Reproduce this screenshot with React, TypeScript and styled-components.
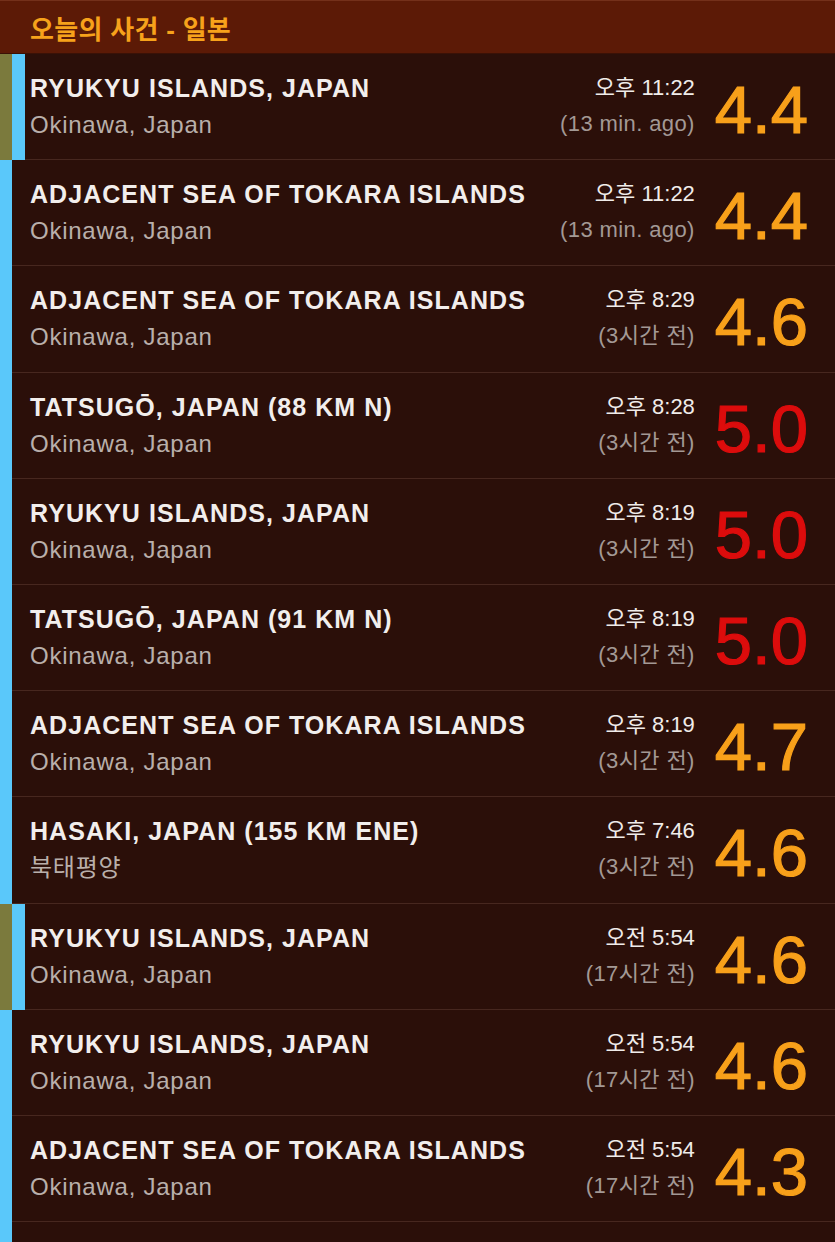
import React from "react";
import styled, { createGlobalStyle } from "styled-components";

const Global = createGlobalStyle`
  html, body { margin: 0; padding: 0; background: #2b0f09; }
  body { font-family: "Liberation Sans", "Noto Sans CJK KR", Arial, sans-serif; overflow: hidden; }
  * { box-sizing: border-box; }
`;

const Page = styled.div`
  width: 835px;
  background: #2b0f09;
`;

const Header = styled.header`
  height: 54px;
  background: #5c1a06;
  border-top: 1px solid #74301a;
  border-bottom: 1px solid #3a1106;
  padding-left: 30px;
  display: flex;
  align-items: center;
`;

const HeaderTitle = styled.h1`
  margin: 0;
  font-family: "Liberation Sans", "Noto Sans CJK KR", sans-serif;
  font-size: 26px;
  font-weight: 700;
  color: #f7a21b;
  letter-spacing: 0.3px;
`;

const Row = styled.div`
  display: flex;
  height: 106.2px;
`;

const Strip = styled.div<{ $color: string; $w: number }>`
  flex: 0 0 ${(p) => p.$w}px;
  background: ${(p) => p.$color};
`;

const Body = styled.div`
  flex: 1;
  display: flex;
  align-items: flex-start;
  padding: 16px 27px 0 18px;
  border-bottom: 1px solid #47271f;
`;

const Info = styled.div<{ $indent: number }>`
  flex: 1;
  min-width: 0;
  margin-left: ${(p) => p.$indent}px;
`;

const Title = styled.div`
  font-size: 25px;
  font-weight: 700;
  line-height: 36px;
  color: #f2eeec;
  letter-spacing: 1.05px;
  white-space: nowrap;
`;

const Sub = styled.div`
  font-size: 24px;
  line-height: 34px;
  padding-top: 2px;
  color: #b9afab;
  letter-spacing: 0.75px;
  white-space: nowrap;
`;

const When = styled.div`
  display: flex;
  flex-direction: column;
  align-items: flex-end;
  margin-right: 20px;
`;

const Clock = styled.div`
  font-size: 22px;
  line-height: 36px;
  color: #f0ecea;
  white-space: nowrap;
`;

const Ago = styled.div`
  font-size: 22px;
  line-height: 34px;
  padding-top: 1px;
  color: #a39995;
  letter-spacing: 0.4px;
  white-space: nowrap;
`;

const Mag = styled.div<{ $strong: boolean }>`
  font-size: 67px;
  line-height: 67px;
  margin-top: 6px;
  color: ${(p) => (p.$strong ? "#dc0c0c" : "#f8a01a")};
  -webkit-text-stroke: 1.2px ${(p) => (p.$strong ? "#dc0c0c" : "#f8a01a")};
  white-space: nowrap;
`;

type Quake = {
  title: string;
  sub: string;
  time: string;
  ago: string;
  mag: string;
  olive?: boolean;
};

const quakes: Quake[] = [
  { title: "RYUKYU ISLANDS, JAPAN", sub: "Okinawa, Japan", time: "오후 11:22", ago: "(13 min. ago)", mag: "4.4", olive: true },
  { title: "ADJACENT SEA OF TOKARA ISLANDS", sub: "Okinawa, Japan", time: "오후 11:22", ago: "(13 min. ago)", mag: "4.4" },
  { title: "ADJACENT SEA OF TOKARA ISLANDS", sub: "Okinawa, Japan", time: "오후 8:29", ago: "(3시간 전)", mag: "4.6" },
  { title: "TATSUGŌ, JAPAN (88 KM N)", sub: "Okinawa, Japan", time: "오후 8:28", ago: "(3시간 전)", mag: "5.0" },
  { title: "RYUKYU ISLANDS, JAPAN", sub: "Okinawa, Japan", time: "오후 8:19", ago: "(3시간 전)", mag: "5.0" },
  { title: "TATSUGŌ, JAPAN (91 KM N)", sub: "Okinawa, Japan", time: "오후 8:19", ago: "(3시간 전)", mag: "5.0" },
  { title: "ADJACENT SEA OF TOKARA ISLANDS", sub: "Okinawa, Japan", time: "오후 8:19", ago: "(3시간 전)", mag: "4.7" },
  { title: "HASAKI, JAPAN (155 KM ENE)", sub: "북태평양", time: "오후 7:46", ago: "(3시간 전)", mag: "4.6" },
  { title: "RYUKYU ISLANDS, JAPAN", sub: "Okinawa, Japan", time: "오전 5:54", ago: "(17시간 전)", mag: "4.6", olive: true },
  { title: "RYUKYU ISLANDS, JAPAN", sub: "Okinawa, Japan", time: "오전 5:54", ago: "(17시간 전)", mag: "4.6" },
  { title: "ADJACENT SEA OF TOKARA ISLANDS", sub: "Okinawa, Japan", time: "오전 5:54", ago: "(17시간 전)", mag: "4.3" },
];

export default function App() {
  return (
    <Page>
      <Global />
      <Header>
        <HeaderTitle>오늘의 사건 - 일본</HeaderTitle>
      </Header>
      {quakes.map((q, i) => (
        <Row key={i}>
          {q.olive ? (
            <>
              <Strip $color="#7b7a3d" $w={12} />
              <Strip $color="#5ac8fa" $w={13} />
            </>
          ) : (
            <Strip $color="#5ac8fa" $w={12} />
          )}
          <Body>
            <Info $indent={q.olive ? -13 : 0}>
              <Title>{q.title}</Title>
              <Sub>{q.sub}</Sub>
            </Info>
            <When>
              <Clock>{q.time}</Clock>
              <Ago>{q.ago}</Ago>
            </When>
            <Mag $strong={parseFloat(q.mag) >= 5}>{q.mag}</Mag>
          </Body>
        </Row>
      ))}
      <Row>
        <Strip $color="#5ac8fa" $w={12} />
        <Body />
      </Row>
    </Page>
  );
}
